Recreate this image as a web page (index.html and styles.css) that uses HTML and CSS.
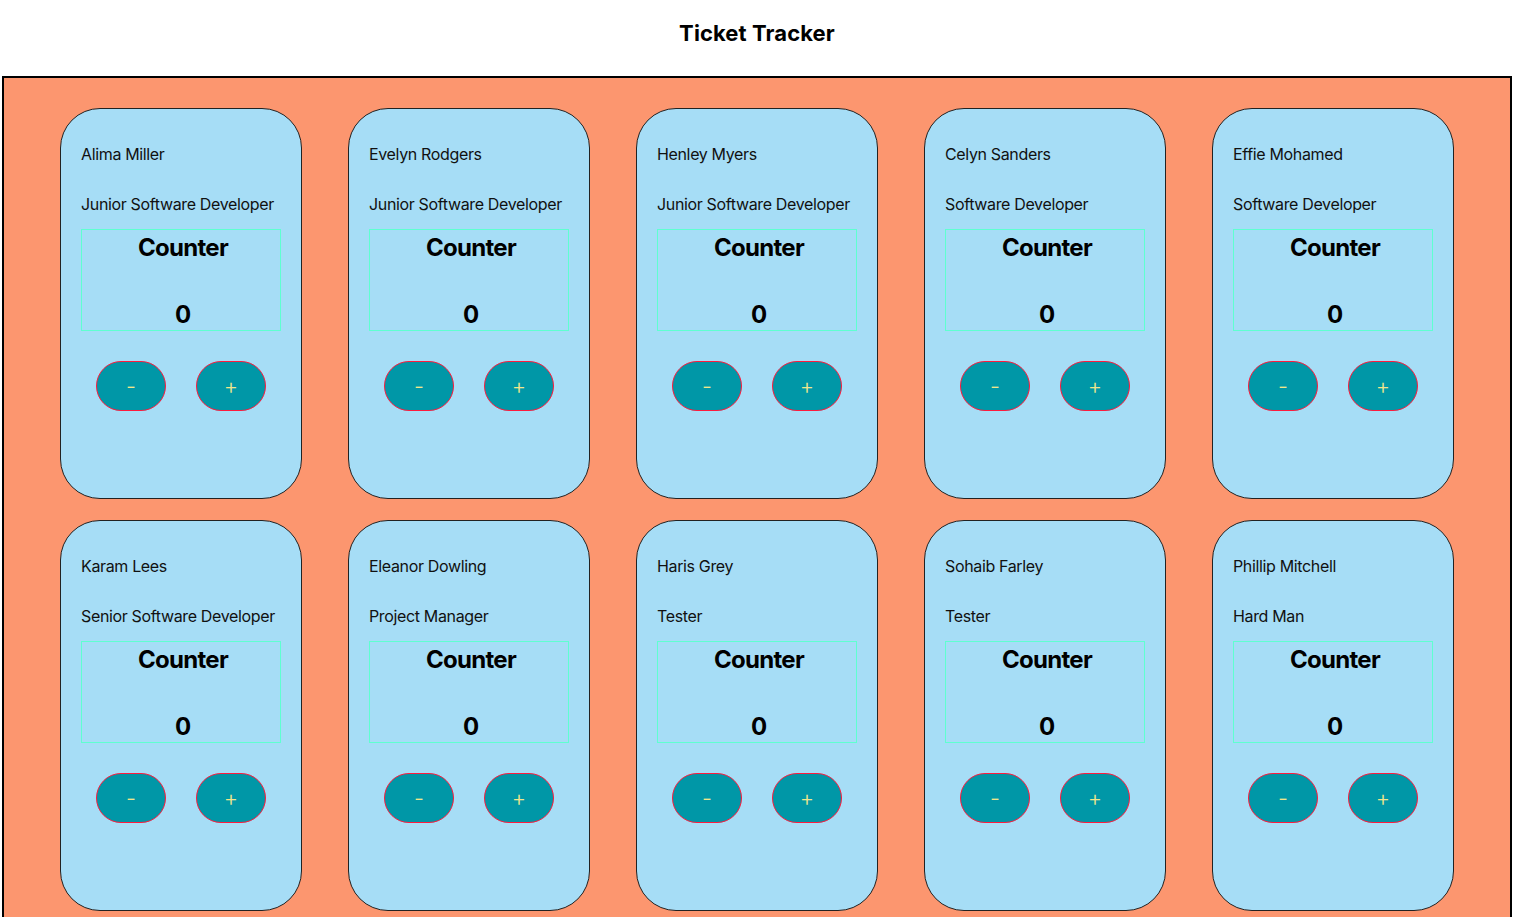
FILE: index.html
```html
<!DOCTYPE html>
<html lang="en">

<head>
    <meta charset="UTF-8">
    <meta name="viewport" content="width=device-width, initial-scale=1.0">
    <title>Ticket Tracker</title>
    <link rel="stylesheet" href="styles.css">
</head>

<body>
    <h1 class="title">Ticket Tracker</h1>

    <div class="board" id="board"></div>

    <script>
        const people = [
            ["Alima Miller", "Junior Software Developer"],
            ["Evelyn Rodgers", "Junior Software Developer"],
            ["Henley Myers", "Junior Software Developer"],
            ["Celyn Sanders", "Software Developer"],
            ["Effie Mohamed", "Software Developer"],
            ["Karam Lees", "Senior Software Developer"],
            ["Eleanor Dowling", "Project Manager"],
            ["Haris Grey", "Tester"],
            ["Sohaib Farley", "Tester"],
            ["Phillip Mitchell", "Hard Man"]
        ];

        const board = document.getElementById("board");

        people.forEach(([name, role]) => {
            const card = document.createElement("div");
            card.className = "card";
            card.innerHTML = `
                <p class="name">${name}</p>
                <p class="role">${role}</p>
                <div class="counter">
                    <h2 class="counter-title">Counter</h2>
                    <div class="count">0</div>
                </div>
                <div class="buttons">
                    <button class="btn minus">-</button>
                    <button class="btn plus">+</button>
                </div>`;

            const count = card.querySelector(".count");
            card.querySelector(".minus").onclick = () => {
                count.textContent = Math.max(0, Number(count.textContent) - 1);
            };
            card.querySelector(".plus").onclick = () => {
                count.textContent = Number(count.textContent) + 1;
            };

            board.appendChild(card);
        });
    </script>
</body>

</html>
```

FILE: styles.css
```css
body {
    margin: 0;
    padding: 0 9px 0 2px;
    font-family: Inter, "Noto Sans", sans-serif;
    color: #111;
    background: #fff;
}

.title {
    margin: 0 0 30px;
    padding-top: 20px;
    font-size: 22px;
    line-height: 26px;
    font-weight: 700;
    letter-spacing: 0.1px;
    text-align: center;
    color: #000;
}

.board {
    border: 2px solid #000;
    background-color: #fc966f;
    padding: 30px 0 30px;
    display: flex;
    flex-wrap: wrap;
    justify-content: center;
    column-gap: 46px;
    row-gap: 21px;
}

.card {
    box-sizing: border-box;
    width: 242px;
    height: 391px;
    padding: 20px;
    background-color: #a6ddf6;
    border: 1px solid #222;
    border-radius: 40px;
}

.name,
.role {
    margin: 0;
    font-size: 16px;
    line-height: 19px;
    letter-spacing: -0.35px;
    white-space: nowrap;
}

.name {
    margin-top: 16px;
    margin-bottom: 31px;
}

.role {
    margin-bottom: 15px;
}

.counter {
    height: 102px;
    box-sizing: border-box;
    padding-left: 4px;
    border: 1px solid #5fffd0;
    text-align: center;
    color: #000;
}

.counter-title {
    margin: 3px 0 38px;
    font-size: 24px;
    line-height: 29px;
    font-weight: 700;
    letter-spacing: -0.7px;
}

.count {
    font-size: 24px;
    line-height: 29px;
    font-weight: 700;
}

.buttons {
    display: flex;
    justify-content: center;
    gap: 30px;
    margin-top: 30px;
}

.btn {
    width: 70px;
    height: 50px;
    padding: 0;
    border: 1px solid #ff1a3c;
    border-radius: 25px;
    background-color: #0097a7;
    color: #f0e68c;
    font-family: Inter, sans-serif;
    font-size: 22px;
    font-weight: 300;
    cursor: pointer;
}

.btn:hover {
    background-color: #00a7b8;
}
```
